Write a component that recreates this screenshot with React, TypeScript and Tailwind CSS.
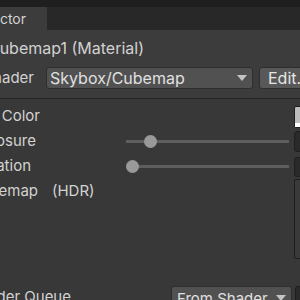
export default function App() {
  return (
    <div className="w-[300px] h-[300px] overflow-hidden bg-[#383838] text-[#d2d2d2] font-['Inter','Liberation_Sans',sans-serif] flex flex-col">
      {/* window top */}
      <div className="h-[7px] bg-[#1f1f1f] shrink-0" />
      {/* tab strip */}
      <div className="h-[23px] flex shrink-0 bg-[#282828]">
        <div className="w-[47px] shrink-0 bg-[#3c3c3c] flex items-center justify-end pr-[21px] overflow-hidden whitespace-nowrap">
          <span className="text-[14px]">Inspector</span>
        </div>
      </div>
      {/* material header */}
      <div className="h-[69px] bg-[#3c3c3c] border-b border-[#232323] flex flex-col shrink-0">
        <div className="h-[34px] flex items-center pt-[2px]">
          <div className="w-[144px] shrink-0 flex justify-end overflow-hidden whitespace-nowrap">
            <span className="text-[16px]">Cubemap1 (Material)</span>
          </div>
        </div>
        <div className="flex items-center h-[22px] mt-[3px]">
          <div className="w-[34px] shrink-0 flex justify-end overflow-hidden whitespace-nowrap">
            <span className="text-[15px]">Shader</span>
          </div>
          <div className="ml-[12px] w-[207px] shrink-0 h-[22px] bg-[#515151] border border-[#2e2e2e] rounded-[3px] flex items-center pl-[3px] pr-[5px] text-[16px] text-[#e0e0e0]">
            <span className="flex-1">Skybox/Cubemap</span>
            <svg width="10" height="6" viewBox="0 0 10 6">
              <path d="M0 0 L10 0 L5 6 Z" fill="#c4c4c4" />
            </svg>
          </div>
          <div className="ml-[6px] w-[60px] shrink-0 h-[22px] bg-[#585858] border border-[#2e2e2e] rounded-[3px] flex items-center pl-[8px] text-[16px] text-[#e6e6e6]">
            Edit...
          </div>
        </div>
      </div>
      {/* properties */}
      <div className="flex flex-col pt-[6px]">
        <div className="h-[23px] flex items-center">
          <div className="w-[40px] shrink-0 flex justify-end overflow-hidden whitespace-nowrap">
            <span className="text-[15px]">Skybox Color</span>
          </div>
          <div className="flex-1" />
          <div className="w-[8px] shrink-0 h-[22px] mr-[-2px] border border-[#1e1e1e] rounded-[2px] bg-[#bdbdbd] flex flex-col justify-end">
            <div className="h-[4px] bg-white" />
          </div>
        </div>
        <div className="h-[25px] flex items-center mt-[1px]">
          <div className="w-[36px] shrink-0 flex justify-end overflow-hidden whitespace-nowrap">
            <span className="text-[15px]">Exposure</span>
          </div>
          <div className="ml-[90px] w-[163px] shrink-0 h-[3px] bg-[#5e5e5e] relative">
            <div className="absolute left-[18px] top-[-5px] w-[13px] h-[13px] rounded-full bg-[#999999]" />
          </div>
          <div className="flex-1" />
          <div className="w-[8px] shrink-0 h-[21px] mr-[-2px] border border-[#1e1e1e] rounded-[3px] bg-[#2a2a2a]" />
        </div>
        <div className="h-[25px] flex items-center">
          <div className="w-[31px] shrink-0 flex justify-end overflow-hidden whitespace-nowrap">
            <span className="text-[15px]">Rotation</span>
          </div>
          <div className="ml-[95px] w-[163px] shrink-0 h-[3px] bg-[#5e5e5e] relative">
            <div className="absolute left-[0px] top-[-5px] w-[13px] h-[13px] rounded-full bg-[#999999]" />
          </div>
          <div className="flex-1" />
          <div className="w-[8px] shrink-0 h-[20px] mr-[-2px] border border-[#1e1e1e] rounded-[3px] bg-[#2a2a2a]" />
        </div>
        <div className="flex items-start h-[80px]">
          <div className="w-[38px] shrink-0 flex justify-end overflow-hidden whitespace-nowrap mt-[1px]">
            <span className="text-[15px]">Cubemap</span>
          </div>
          <span className="text-[15px] ml-[14px] mt-[1px]">(HDR)</span>
          <div className="flex-1" />
          <div className="w-[8px] shrink-0 h-[80px] mr-[-2px] border border-[#1e1e1e] rounded-[2px] bg-[#3a3a3a]" />
        </div>
      </div>
      <div className="flex-1" />
      <div className="h-[14px] flex items-start shrink-0">
        <div className="w-[71px] shrink-0 flex justify-end overflow-hidden whitespace-nowrap mt-[1px]">
          <span className="text-[15px] leading-[20px]">Render Queue</span>
        </div>
        <div className="ml-[100px] w-[121px] shrink-0 h-[22px] bg-[#515151] border border-[#2e2e2e] rounded-[3px] flex items-start px-[5px] pt-[1px] text-[15px] text-[#e0e0e0]">
          <span className="flex-1">From Shader</span>
          <svg width="10" height="6" viewBox="0 0 10 6" className="mt-[7px]">
            <path d="M0 0 L10 0 L5 6 Z" fill="#c4c4c4" />
          </svg>
        </div>
        <div className="ml-[3px] w-[8px] shrink-0 h-[22px] border border-[#1e1e1e] rounded-[3px] bg-[#2a2a2a]" />
      </div>
    </div>
  );
}
